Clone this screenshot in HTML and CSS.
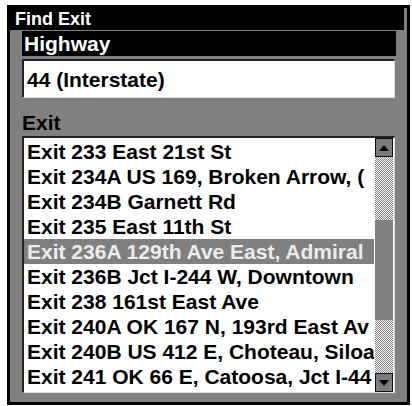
FILE: index.html
```html
<!DOCTYPE html>
<html lang="en">
<head>
    <meta charset="UTF-8">
    <meta name="viewport" content="width=device-width, initial-scale=1.0">
    <link rel="stylesheet" href="styles.css">
    <title>Find Exit</title>
</head>
<body>
    <div class="window">
        <div class="title-bar">Find Exit</div>
        <div class="content">
            <div class="field-title">Highway</div>
            <div class="field-value">44 (Interstate)</div>
            <div class="label">Exit</div>
            <div class="list">
                <div class="rows">
                    <div class="row">Exit 233 East 21st St</div>
                    <div class="row">Exit 234A US 169, Broken Arrow, (</div>
                    <div class="row">Exit 234B Garnett Rd</div>
                    <div class="row">Exit 235 East 11th St</div>
                    <div class="row selected">Exit 236A 129th Ave East, Admiral</div>
                    <div class="row">Exit 236B Jct I-244 W, Downtown</div>
                    <div class="row">Exit 238 161st East Ave</div>
                    <div class="row">Exit 240A OK 167 N, 193rd East Av</div>
                    <div class="row">Exit 240B US 412 E, Choteau, Siloar</div>
                    <div class="row">Exit 241 OK 66 E, Catoosa, Jct I-44</div>
                </div>
                <!-- scrollbar -->
                <div class="scrollbar">
                    <div class="scroll-btn">
                        <svg width="10" height="6" viewBox="0 0 10 6"><polygon points="0,6 10,6 5,0" fill="#000"/></svg>
                    </div>
                    <div class="track top-track"></div>
                    <div class="thumb"></div>
                    <div class="track"></div>
                    <div class="scroll-btn">
                        <svg width="10" height="6" viewBox="0 0 10 6"><polygon points="0,0 10,0 5,6" fill="#000"/></svg>
                    </div>
                </div>
            </div>
        </div>
    </div>
</body>
</html>
```

FILE: styles.css
```css
body {
    margin: 0;
    background-color: #fff;
    font-family: "Liberation Sans", Arial, sans-serif;
    font-weight: bold;
}
.window {
    margin: 5px 0 0 7px;
    width: 403px;
    height: 400px;
    box-sizing: border-box;
    border: 3px solid #000;
    background-color: #808080;
}
/* タイトル */
.title-bar {
    height: 22px;
    margin-right: 3px;
    padding-left: 5px;
    background-color: #000;
    color: #fff;
    font-size: 18px;
    line-height: 22px;
}
.content {
    padding: 1px 11px 0 12px;
}
.field-title {
    height: 25px;
    padding-left: 2px;
    background-color: #000;
    color: #fff;
    font-size: 21px;
    line-height: 25px;
}
.field-value {
    height: 39px;
    margin-top: 3px;
    margin-right: 1px;
    box-sizing: border-box;
    padding: 2px 0 0 3px;
    border-left: 2px solid #222;
    border-top: 2px solid #222;
    border-right: 1px solid #ddd;
    border-bottom: 1px solid #ddd;
    background-color: #fff;
    color: #000;
    font-size: 21px;
    line-height: 33px;
}
.label {
    padding-top: 12px;
    height: 26px;
    color: #000;
    font-size: 21px;
    line-height: 25px;
}
/* リスト */
.list {
    display: flex;
    height: 257px;
    margin-right: 1px;
    box-sizing: border-box;
    border-left: 2px solid #222;
    border-top: 2px solid #222;
    border-right: 1px solid #ddd;
    border-bottom: 1px solid #ddd;
    background-color: #fff;
}
.rows {
    flex: 1;
    min-width: 0;
    padding-top: 1px;
}
.row {
    height: 25px;
    padding-left: 3px;
    overflow: hidden;
    white-space: nowrap;
    color: #000;
    font-size: 21px;
    line-height: 25px;
}
.selected {
    background-color: #808080;
    color: #ececec;
}
.scrollbar {
    display: flex;
    flex-direction: column;
    width: 18px;
    margin: 0 1px 0 1px;
}
.scroll-btn {
    display: flex;
    align-items: center;
    justify-content: center;
    height: 19px;
    box-sizing: border-box;
    border: 1px solid #111;
    background-color: #7c7c7c;
}
.track {
    flex: 1;
    background: repeating-conic-gradient(#808080 0 25%, #fff 0 50%) 0 0 / 2px 2px;
}
.top-track {
    flex: none;
    height: 63px;
}
.thumb {
    height: 100px;
    background-color: #808080;
}
```
